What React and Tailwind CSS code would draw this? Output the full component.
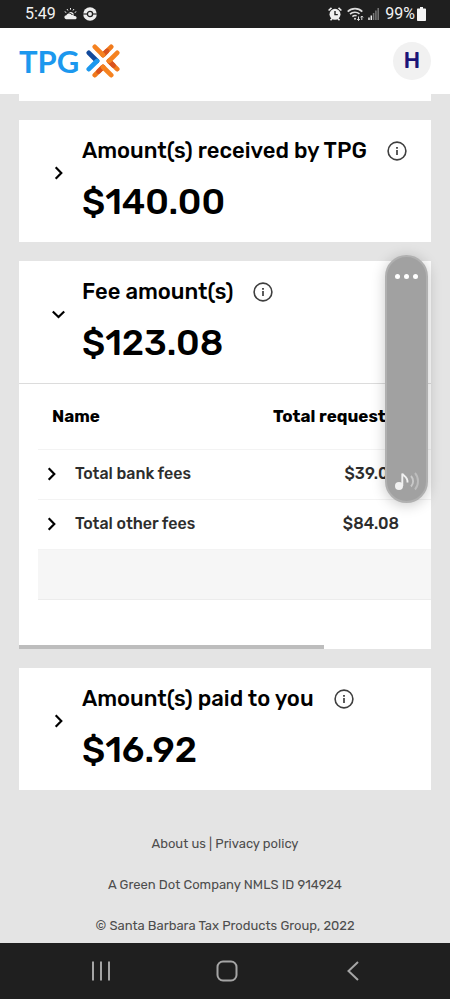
import React from "react";

function Chevron({ down }) {
  return (
    <svg className="size-4" viewBox="0 0 16 16" fill="none" stroke="#000" strokeWidth="2.2" aria-hidden="true">
      {down ? <path d="M2.8 5.5 8.500 11l5.700-5.500" /> : <path d="M5.7 2.2 11.300 8l-5.600 5.8" />}
    </svg>
  );
}

function InfoButton({ label }) {
  return (
    <button type="button" aria-label={label} className="size-5 shrink-0">
      <svg className="size-5" viewBox="0 0 20 20" fill="none" stroke="#3f3f3f" aria-hidden="true">
        <circle cx="10" cy="10" r="8.9" strokeWidth="1.6" />
        <path d="M10 9v5" strokeWidth="1.7" />
        <path d="M10 6v1.8" strokeWidth="1.8" />
      </svg>
    </button>
  );
}

function AmountHeader({ title, amount, open }) {
  return (
    <div className="flex h-[122px] items-start">
      <button type="button" aria-label={title} aria-expanded={!!open} className="mt-[45px] ml-[31px] size-4 shrink-0">
        <Chevron down={open} />
      </button>
      <div className="ml-4 pt-[15px]">
        <div className="flex items-center gap-5 whitespace-nowrap">
          <h2 className="text-[22px] leading-8 font-medium text-black">{title}</h2>
          <InfoButton label={"About " + title} />
        </div>
        <p className="mt-3 text-[36px] leading-[46px] font-medium text-black">{amount}</p>
      </div>
    </div>
  );
}

function StatusBar() {
  return (
    <div className="flex h-7 shrink-0 items-center bg-[#1f1f1f] pr-6 pl-[25px] font-['Roboto',sans-serif] text-[#f2f2f2]">
      <span className="text-[16px] leading-5">5:49</span>
      <svg className="ml-2 h-3 w-[13px]" viewBox="0 0 13 12" fill="#eee" aria-hidden="true">
        <path d="M3.4 11.3C1.4 11.3.4 10.3.4 9.2c0-1 .8-1.8 2-1.9.5-1.3 1.9-2 3.3-1.7.9.2 1.6.7 2 1.5 1-.4 2.2 0 2.6 1 1.3 0 2.3.6 2.3 1.6 0 1-.8 1.6-2 1.6Z" />
        <path d="M4.6 4.6a3.4 3.4 0 0 1 5.4 2.4c-.5-.3-1-.4-1.6-.4-.8-1.2-2.2-2-3.800-2Z" />
        <path d="M6.5 0v1.700M3 1l.9 1.500M10 1 9 2.500M.7 3.700l1.600.8M12.300 3.700l-1.600.8" stroke="#eee" strokeWidth="1" />
      </svg>
      <svg className="ml-[6px] size-[14px]" viewBox="0 0 14 14" aria-hidden="true">
        <circle cx="7" cy="7" r="6.8" fill="#eee" />
        <path d="M0 7h14" stroke="#1f1f1f" strokeWidth="1.1" />
        <circle cx="7" cy="7" r="2.6" fill="#eee" stroke="#1f1f1f" strokeWidth="1.3" />
      </svg>
      <svg className="ml-auto size-[14px]" viewBox="0 0 14 14" aria-hidden="true">
        <circle cx="7" cy="7.300" r="5.500" fill="#eee" />
        <path d="M.6 3.500 3.500.9M13.400 3.500 10.500.9M2.500 13.300l1.500-1.600M11.500 13.300 10 11.700" stroke="#eee" strokeWidth="1.600" />
        <path d="M7 4v3.600h2.800" fill="none" stroke="#1f1f1f" strokeWidth="1.400" />
      </svg>
      <svg className="ml-[5px] h-[14px] w-[17px]" viewBox="0 0 17 14" fill="none" stroke="#ddd" strokeWidth="1.6" aria-hidden="true">
        <path d="M.7 4.600a10.400 10.400 0 0 1 14.600 0M3 7.200a7.200 7.200 0 0 1 9.500-.4M5.400 9.600a4 4 0 0 1 4.200-.8" />
        <circle cx="8" cy="11.800" r="1" fill="#ddd" stroke="none" />
        <path d="M11.500 9.500v4M10.200 12l1.300 1.500 1.300-1.500M14.800 13V9M13.500 10.400 14.800 9l1.300 1.400" strokeWidth="1" />
      </svg>
      <svg className="ml-1 h-3 w-[11px]" viewBox="0 0 11 12" aria-hidden="true">
        <path d="M1 12V9.500M3.300 12V7.500" stroke="#eee" strokeWidth="1.500" />
        <path d="M5.600 12V5M7.900 12V2.500M10.200 12V0" stroke="#777" strokeWidth="1.500" />
      </svg>
      <span className="ml-[6px] text-[16px] leading-5">99%</span>
      <svg className="ml-[2px] h-[14px] w-[9px]" viewBox="0 0 9 14" fill="#f5f5f5" aria-hidden="true">
        <path d="M3 0h3v1.500h2.200q.8 0 .8.800v10.900q0 .8-.8.800H.8Q0 14 0 13.200V2.300q0-.8.8-.8H3Z" />
      </svg>
    </div>
  );
}

function Logo() {
  return (
    <a href="#home" aria-label="TPG home" className="flex items-center">
      <span className="font-['Lato',sans-serif] text-[31px] leading-9 font-bold text-[#1c98ee]">TPG</span>
      <svg className="ml-[7px] size-[34px]" viewBox="0 0 34 34" fill="none" strokeWidth="4.7" strokeLinecap="round" aria-hidden="true">
        <path d="m17 11 8.200-8.200" stroke="#f07a1c" />
        <path d="m17 11 4-4" stroke="#d9531e" />
        <path d="M8.800 2.800 17 11" stroke="#f58220" />
        <path d="m23 17 8.200 8.200" stroke="#f07a1c" />
        <path d="m23 17 4.500 4.500" stroke="#d9531e" />
        <path d="M31.200 8.800 23 17" stroke="#f58220" />
        <path d="M17 23 8.800 31.200" stroke="#f07a1c" />
        <path d="m17 23-4.500 4.500" stroke="#d9531e" />
        <path d="m17 23 8.200 8.200" stroke="#f58220" />
        <path d="m2.800 8.800 8.200 8.200" stroke="#124a9c" />
        <path d="M11 17 2.800 25.200" stroke="#1c98ee" />
      </svg>
    </a>
  );
}

const fees = [
  { name: "Total bank fees", total: "$39.00" },
  { name: "Total other fees", total: "$84.08" },
];

function FeeTable() {
  return (
    <div className="overflow-hidden border-t border-[#dcdcdc] pl-[19px]">
      <table className="w-[516px] table-fixed border-collapse text-[16px] leading-5">
        <colgroup>
          <col className="w-[235px]" />
          <col className="w-[145px]" />
          <col />
        </colgroup>
        <thead>
          <tr className="h-[65px] border-b border-[#f3f3f3] text-left text-[17px] font-bold text-black">
            <th scope="col" className="pl-[14px]">Name</th>
            <th scope="col" className="whitespace-nowrap">Total requested</th>
            <td />
          </tr>
        </thead>
        <tbody>
          {fees.map((fee) => (
            <tr key={fee.name} className="h-[50px] border-b border-[#f3f3f3] font-medium text-[#2d2d2d]">
              <td className="pl-[5px]">
                <div className="flex items-center gap-4">
                  <button type="button" aria-label={"Expand " + fee.name} className="size-4">
                    <Chevron />
                  </button>
                  <span>{fee.name}</span>
                </div>
              </td>
              <td className="pr-[19px] text-right">{fee.total}</td>
              <td />
            </tr>
          ))}
          <tr className="h-[50px] border-b border-[#ececec] bg-[#f6f6f6]">
            <td colSpan={3} />
          </tr>
        </tbody>
      </table>
    </div>
  );
}

function VolumePanel() {
  return (
    <div className="absolute top-[255px] right-[22px] flex h-[248px] w-[43px] flex-col items-center justify-between rounded-full border-2 border-[#b0b0b0] bg-[#a1a1a1] pt-[17px] pb-[10px] shadow-[0_2px_14px_rgba(0,0,0,0.22)]">
      <button type="button" aria-label="Sound settings" className="flex gap-1">
        <span className="size-[5px] rounded-full bg-white" />
        <span className="size-[5px] rounded-full bg-white" />
        <span className="size-[5px] rounded-full bg-white" />
      </button>
      <button type="button" aria-label="Media volume">
        <svg className="h-5 w-[26px]" viewBox="0 0 26 20" fill="none" aria-hidden="true">
          <circle cx="5" cy="15" r="4" fill="#f1f1f1" />
          <path d="M8.300 15V2.500c.6 2.500 5.800 3.200 5.200 9" stroke="#f1f1f1" strokeWidth="1.900" />
          <path d="M17 5c2.800 3 2.800 7.500 0 10.500" stroke="#c9c9c9" strokeWidth="1.900" />
          <path d="M21 2c4 4.500 4 12 0 16.500" stroke="#bdbdbd" strokeWidth="1.900" />
        </svg>
      </button>
    </div>
  );
}

export default function App() {
  return (
    <div className="relative flex min-h-screen flex-col bg-[#e4e4e4] font-['Rubik','Roboto',sans-serif]">
      <StatusBar />
      <header className="flex h-[66px] shrink-0 items-center justify-between bg-white px-[19px]">
        <Logo />
        <button type="button" aria-label="Account" className="size-[38px] rounded-full bg-[#f1f1f1] pb-[2px] text-[23px] leading-9 font-medium text-[#1b1478]">
          H
        </button>
      </header>

      <main className="flex flex-col gap-[19px] px-[19px]">
        <div className="h-[7px] bg-white" />
        <section className="bg-white">
          <AmountHeader title="Amount(s) received by TPG" amount="$140.00" />
        </section>
        <section className="bg-white">
          <AmountHeader title="Fee amount(s)" amount="$123.08" open />
          <FeeTable />
          <div className="mt-[45px] h-1 w-[74%] bg-[#bdbdbd]" />
        </section>
        <section className="bg-white">
          <AmountHeader title="Amount(s) paid to you" amount="$16.92" />
        </section>
      </main>

      <footer className="flex flex-col items-center gap-[21px] pt-11 text-[13px] leading-5 text-[#4d4d4d]">
        <p>
          <a href="#about">About us</a> | <a href="#privacy">Privacy policy</a>
        </p>
        <p>A Green Dot Company NMLS ID 914924</p>
        <p>© Santa Barbara Tax Products Group, 2022</p>
      </footer>

      <nav aria-label="System" className="mt-auto grid h-14 shrink-0 grid-cols-[45%_11%_44%] items-center bg-[#1f1f1f]">
        <button type="button" aria-label="Recent apps" className="flex justify-center">
          <svg className="size-5" viewBox="0 0 20 20" stroke="#a5a5a5" strokeWidth="2" aria-hidden="true">
            <path d="M2 .5v19M10 .5v19M18 .5v19" />
          </svg>
        </button>
        <button type="button" aria-label="Home" className="flex justify-center">
          <svg className="size-[22px]" viewBox="0 0 22 22" fill="none" stroke="#a5a5a5" strokeWidth="2" aria-hidden="true">
            <rect x="1.500" y="1.500" width="19" height="19" rx="5.500" />
          </svg>
        </button>
        <button type="button" aria-label="Back" className="flex justify-center pl-1">
          <svg className="h-5 w-3" viewBox="0 0 12 20" fill="none" stroke="#a5a5a5" strokeWidth="2" aria-hidden="true">
            <path d="M11 1 1.500 10l9.500 9" />
          </svg>
        </button>
      </nav>
      <VolumePanel />
    </div>
  );
}
